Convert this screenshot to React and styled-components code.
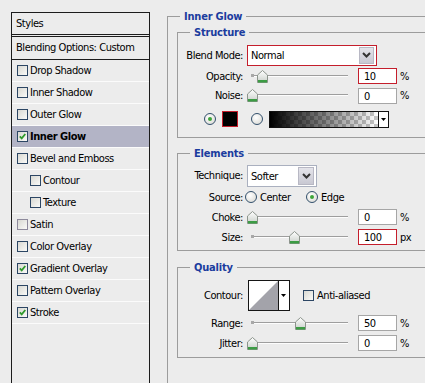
import React from "react";
import styled, { createGlobalStyle } from "styled-components";

const GlobalStyle = createGlobalStyle`
  html, body {
    margin: 0;
    padding: 0;
    background: #ececec;
    overflow: hidden;
  }
`;

const Page = styled.div`
  display: flex;
  align-items: flex-start;
  width: 425px;
  height: 383px;
  overflow: hidden;
  font-family: "DejaVu Sans Condensed", "DejaVu Sans", sans-serif;
  font-size: 11px;
  letter-spacing: -0.45px;
  color: #000;
`;

/* ---------- left list ---------- */

const StylesList = styled.div`
  flex-shrink: 0;
  margin: 12px 0 0 11px;
  width: 137px;
  height: 400px;
  border: 1px solid #1c1c1c;
`;

const ListHeader = styled.div`
  height: 21px;
  line-height: 21px;
  padding-left: 4px;
  border-bottom: 3px double #1c1c1c;
`;

const BlendingRow = styled.div`
  height: 22px;
  line-height: 22px;
  padding-left: 4px;
  border-bottom: 1px solid #1c1c1c;
`;

const StyleRow = styled.div`
  display: flex;
  align-items: center;
  height: 21px;
  padding-left: ${(p) => (p.$indent ? 18 : 5)}px;
  border-bottom: 1px solid #fbfbfb;
  background: ${(p) => (p.$active ? "#b3b4c6" : "transparent")};
  font-weight: ${(p) => (p.$active ? "bold" : "normal")};
`;

const Box = styled.span`
  position: relative;
  flex-shrink: 0;
  box-sizing: border-box;
  width: 11px;
  height: 11px;
  margin-right: ${(p) => p.$gap || 2}px;
  border: 1px solid ${(p) => (p.$faded ? "#8e8a9c" : "#2c4664")};
  background: linear-gradient(135deg, #d8d8d2, #fafaf8);
  svg {
    position: absolute;
    left: 1px;
    top: 1px;
  }
`;

function CheckBox({ checked, faded, gap }) {
  return (
    <Box $faded={faded} $gap={gap}>
      {checked && (
        <svg width="7" height="7" viewBox="0 0 7 7">
          <path d="M0.8 3.4 L2.7 5.4 L6.3 1" fill="none" stroke="#2f9a2c" strokeWidth="1.8" />
        </svg>
      )}
    </Box>
  );
}

const styleItems = [
  { name: "Drop Shadow" },
  { name: "Inner Shadow" },
  { name: "Outer Glow" },
  { name: "Inner Glow", checked: true, active: true },
  { name: "Bevel and Emboss" },
  { name: "Contour", indent: true },
  { name: "Texture", indent: true },
  { name: "Satin", faded: true },
  { name: "Color Overlay" },
  { name: "Gradient Overlay", checked: true },
  { name: "Pattern Overlay" },
  { name: "Stroke", checked: true },
];

/* ---------- right settings ---------- */

const Settings = styled.div`
  position: relative;
  flex-shrink: 0;
  margin: 16px 0 0 17px;
  width: 280px;
  min-height: 400px;
  padding: 15px 0 0 9px;
  border-top: 1px solid #9c9c9c;
  border-left: 1px solid #9c9c9c;
`;

const Title = styled.span`
  position: absolute;
  top: -7px;
  left: 12px;
  padding: 0 4px;
  line-height: 13px;
  background: #ececec;
  color: #1b3c9e;
  font-weight: bold;
  letter-spacing: -0.2px;
`;

const Group = styled.section`
  position: relative;
  margin-top: ${(p) => p.$top || 0}px;
  padding: ${(p) => p.$pad || 10}px 0 ${(p) => p.$bottom || 3}px 0;
  border: 1px solid #9c9c9c;
`;

const Row = styled.div`
  display: flex;
  align-items: center;
  height: ${(p) => p.$h}px;
  padding-left: ${(p) => p.$indent || 0}px;
`;

const Label = styled.span`
  width: 65px;
  flex-shrink: 0;
  text-align: right;
  white-space: nowrap;
`;

const Select = styled.div`
  display: flex;
  align-items: center;
  box-sizing: border-box;
  width: ${(p) => p.$w}px;
  height: ${(p) => p.$h}px;
  margin-left: 4px;
  padding: 1px 2px 1px 3px;
  background: #fff;
  border: 1px solid ${(p) => (p.$alert ? "#c41e2c" : "#aab0bf")};
`;

const SelectText = styled.span`
  flex: 1;
  padding-top: 1px;
`;

const SelectButton = styled.span`
  display: flex;
  align-items: center;
  justify-content: center;
  width: ${(p) => p.$w}px;
  align-self: stretch;
  background: linear-gradient(#e4e4ea, #c8c8d2);
  border: 1px solid #b8b8c4;
  box-sizing: border-box;
`;

function Chevron() {
  return (
    <svg width="9" height="6" viewBox="0 0 9 6">
      <path d="M1 1 L4.5 4.5 L8 1" fill="none" stroke="#333" strokeWidth="2" />
    </svg>
  );
}

const Track = styled.div`
  position: relative;
  flex-shrink: 0;
  width: 97px;
  height: 13px;
  margin-left: 8px;
  &::before {
    content: "";
    position: absolute;
    left: 0;
    right: 0;
    top: 5px;
    height: 1px;
    background: #9e9e9e;
    box-shadow: 0 1px 0 #fdfdfd;
  }
  &::after {
    content: "";
    position: absolute;
    left: 0;
    top: 4px;
    width: 3px;
    height: 3px;
    background: #a8a8a8;
  }
`;

const Thumb = styled.svg`
  position: absolute;
  top: 0;
  margin-left: -5px;
  z-index: 1;
`;

const NumberBox = styled.div`
  box-sizing: border-box;
  width: 39px;
  height: 16px;
  margin-left: 10px;
  padding: 1px 0 0 5px;
  background: #fff;
  border: 1px solid ${(p) => (p.$alert ? "#c41e2c" : "#a6a6a6")};
  line-height: 13px;
`;

const Unit = styled.span`
  margin-left: 3px;
`;

function SliderThumb({ pos }) {
  return (
    <Thumb width="11" height="13" viewBox="0 0 11 13" style={{ left: `${pos}%` }}>
      <defs>
        <linearGradient id={`thumbFill${pos}`} x1="0" y1="0" x2="0" y2="1">
          <stop offset="0" stopColor="#ffffff" />
          <stop offset="1" stopColor="#c9cfc9" />
        </linearGradient>
      </defs>
      <path d="M0.5 5 L5.5 0.5 L10.5 5 L10.5 12.5 L0.5 12.5 Z" fill={`url(#thumbFill${pos})`} stroke="#8c948c" />
      <rect x="1" y="10" width="9" height="2.5" fill="#3c9c44" />
    </Thumb>
  );
}

function SliderRow({ label, value, pos, unit = "%", alert, h = 20 }) {
  return (
    <Row $h={h}>
      <Label>{label}</Label>
      <Track>
        <SliderThumb pos={pos} />
      </Track>
      <NumberBox $alert={alert}>{value}</NumberBox>
      <Unit>{unit}</Unit>
    </Row>
  );
}

const RadioCircle = styled.span`
  position: relative;
  flex-shrink: 0;
  box-sizing: border-box;
  width: 12px;
  height: 12px;
  border-radius: 50%;
  border: 1px solid #33506c;
  background: radial-gradient(circle at 40% 35%, #fff, #d6d6d0);
  &::after {
    content: "";
    display: ${(p) => (p.$on ? "block" : "none")};
    position: absolute;
    left: 3px;
    top: 3px;
    width: 4px;
    height: 4px;
    border-radius: 50%;
    background: #3ea53a;
  }
`;

const RadioOption = styled.span`
  display: flex;
  align-items: center;
  width: ${(p) => (p.$w ? `${p.$w}px` : "auto")};
  margin-left: ${(p) => p.$ml || 0}px;
  span + span {
    margin-left: 3px;
  }
`;

const Swatch = styled.span`
  box-sizing: border-box;
  width: 16px;
  height: 16px;
  margin-left: 6px;
  background: #000;
  border: 1px solid #c41e2c;
`;

const GradientPicker = styled.span`
  display: flex;
  box-sizing: border-box;
  width: 120px;
  height: 17px;
  margin-left: 6px;
  border: 1px solid #111;
`;

const GradientStrip = styled.span`
  flex: 1;
  background: linear-gradient(to right, rgba(0, 0, 0, 1), rgba(0, 0, 0, 0)),
    repeating-conic-gradient(#c6c6c6 0% 25%, #ffffff 0% 50%) 0 0 / 8px 8px;
  border-right: 1px solid #111;
`;

const SmallDrop = styled.span`
  display: flex;
  align-items: center;
  justify-content: center;
  width: 9px;
  background: #fff;
`;

function DownTriangle() {
  return (
    <svg width="5" height="3" viewBox="0 0 5 3">
      <path d="M0 0 L5 0 L2.5 3 Z" fill="#000" />
    </svg>
  );
}

const ContourPicker = styled.span`
  display: flex;
  box-sizing: border-box;
  width: 42px;
  height: 31px;
  margin-left: 5px;
  border: 1px solid #151515;
  background: #fff;
`;

const ContourPreview = styled.svg`
  display: block;
  border-right: 1px solid #151515;
`;

const CheckLabel = styled.span`
  display: flex;
  align-items: center;
  margin-left: 13px;
`;

export default function App() {
  return (
    <>
      <GlobalStyle />
      <Page>
        <StylesList>
          <ListHeader>Styles</ListHeader>
          <BlendingRow>Blending Options: Custom</BlendingRow>
          {styleItems.map((item) => (
            <StyleRow key={item.name} $indent={item.indent} $active={item.active}>
              <CheckBox checked={item.checked} faded={item.faded} />
              {item.name}
            </StyleRow>
          ))}
        </StylesList>

        <Settings>
          <Title>Inner Glow</Title>

          <Group $pad={11} $bottom={4}>
            <Title>Structure</Title>
            <Row $h={22}>
              <Label>Blend Mode:</Label>
              <Select $w={130} $h={21} $alert>
                <SelectText>Normal</SelectText>
                <SelectButton $w={15}>
                  <Chevron />
                </SelectButton>
              </Select>
            </Row>
            <SliderRow label="Opacity:" value="10" pos={11} alert />
            <SliderRow label="Noise:" value="0" pos={1} h={19} />
            <Row $h={28} $indent={26}>
              <RadioCircle $on />
              <Swatch />
              <RadioOption $ml={13}>
                <RadioCircle />
              </RadioOption>
              <GradientPicker>
                <GradientStrip />
                <SmallDrop>
                  <DownTriangle />
                </SmallDrop>
              </GradientPicker>
            </Row>
          </Group>

          <Group $top={15} $pad={10} $bottom={3}>
            <Title>Elements</Title>
            <Row $h={23}>
              <Label>Technique:</Label>
              <Select $w={70} $h={22}>
                <SelectText>Softer</SelectText>
                <SelectButton $w={16}>
                  <Chevron />
                </SelectButton>
              </Select>
            </Row>
            <Row $h={20}>
              <Label>Source:</Label>
              <RadioOption $w={61} $ml={2}>
                <RadioCircle />
                <span>Center</span>
              </RadioOption>
              <RadioOption>
                <RadioCircle $on />
                <span>Edge</span>
              </RadioOption>
            </Row>
            <SliderRow label="Choke:" value="0" pos={1} />
            <SliderRow label="Size:" value="100" pos={44} unit="px" alert />
          </Group>

          <Group $top={16} $pad={10} $bottom={4}>
            <Title>Quality</Title>
            <Row $h={35}>
              <Label>Contour:</Label>
              <ContourPicker>
                <ContourPreview width="29" height="29" viewBox="0 0 29 29">
                  <path d="M0 29 L29 0 L29 29 Z" fill="#a3a3aa" />
                </ContourPreview>
                <SmallDrop>
                  <DownTriangle />
                </SmallDrop>
              </ContourPicker>
              <CheckLabel>
                <CheckBox gap={3} />
                Anti-aliased
              </CheckLabel>
            </Row>
            <SliderRow label="Range:" value="50" pos={50} />
            <SliderRow label="Jitter:" value="0" pos={1} />
          </Group>
        </Settings>
      </Page>
    </>
  );
}
